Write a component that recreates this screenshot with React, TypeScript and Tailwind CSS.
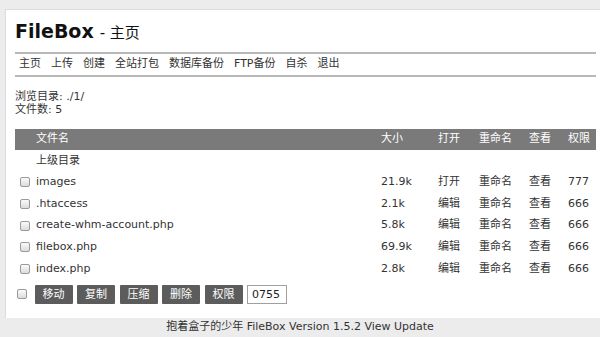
import React from 'react'

const files = [
  { name: 'images', size: '21.9k', open: '打开', perm: '777' },
  { name: '.htaccess', size: '2.1k', open: '编辑', perm: '666' },
  { name: 'create-whm-account.php', size: '5.8k', open: '编辑', perm: '666' },
  { name: 'filebox.php', size: '69.9k', open: '编辑', perm: '666' },
  { name: 'index.php', size: '2.8k', open: '编辑', perm: '666' },
]

const nav = ['主页', '上传', '创建', '全站打包', '数据库备份', 'FTP备份', '自杀', '退出']
const actions = ['移动', '复制', '压缩', '删除', '权限']

function Check() {
  return <span className="block w-[10px] h-[10px] rounded-[2px] border border-[#9a9a9a] bg-gradient-to-b from-[#fafafa] to-[#dcdcdc]" />
}

export default function App() {
  return (
    <div
      className="w-[600px] h-[337px] bg-[#ececec] flex flex-col text-[#333] overflow-hidden"
      style={{ fontFamily: '"DejaVu Sans", "Noto Sans CJK SC", sans-serif' }}
    >
      <div className="ml-[5px] mt-[9px] h-[309px] bg-white border-l border-t border-[#dcdcdc] pl-[9px] pr-[4px]">
        {/* 标题 */}
        <div className="h-[42px] flex items-end pb-[11px]">
          <span className="text-[19px] font-bold text-[#111] leading-none">FileBox</span>
          <span className="text-[15px] text-[#111] leading-none ml-[6px]">- 主页</span>
        </div>
        <div className="border-t-2 border-[#b8b8b8]" />
        <div className="h-[21px] flex items-center gap-[10px] pl-[4px] text-[11px]">
          {nav.map((n) => (
            <span key={n}>{n}</span>
          ))}
        </div>
        <div className="border-t-2 border-[#b8b8b8]" />

        <div className="mt-[13px] text-[11px] leading-[13px]">
          <div>浏览目录: ./1/</div>
          <div>文件数: 5</div>
        </div>

        <table className="mt-[13px] w-[581px] text-[11px] border-collapse table-fixed">
          <colgroup>
            <col className="w-[20px]" />
            <col className="w-[341px]" />
            <col className="w-[57px]" />
            <col className="w-[41px]" />
            <col className="w-[50px]" />
            <col className="w-[39px]" />
            <col className="w-[33px]" />
          </colgroup>
          <thead>
            <tr className="h-[21px] bg-[#7a7a7a] text-white text-left">
              <th />
              <th className="font-normal pl-[1px]">文件名</th>
              <th className="font-normal pl-[5px]">大小</th>
              <th className="font-normal pl-[5px]">打开</th>
              <th className="font-normal pl-[5px]">重命名</th>
              <th className="font-normal pl-[5px]">查看</th>
              <th className="font-normal pl-[5px]">权限</th>
            </tr>
          </thead>
          <tbody>
            <tr className="h-[21.6px]">
              <td />
              <td className="pl-[1px]">上级目录</td>
              <td colSpan={5} />
            </tr>
            {files.map((f) => (
              <tr key={f.name} className="h-[21.6px]">
                <td className="pl-[5px]">
                  <Check />
                </td>
                <td className="pl-[1px]">{f.name}</td>
                <td className="pl-[5px]">{f.size}</td>
                <td className="pl-[5px]">{f.open}</td>
                <td className="pl-[5px]">重命名</td>
                <td className="pl-[5px]">查看</td>
                <td className="pl-[5px]">{f.perm}</td>
              </tr>
            ))}
          </tbody>
        </table>

        <div className="mt-[5px] flex items-center gap-[4.5px] pl-[2px]">
          <span className="mr-[3px]">
            <Check />
          </span>
          {actions.map((a) => (
            <button key={a} type="button" className="w-[38px] h-[19px] bg-[#5c5c5c] text-white text-[11px] leading-none rounded-[1px]">
              {a}
            </button>
          ))}
          <input
            readOnly
            value="0755"
            className="w-[40px] h-[19px] border border-[#a0a0a0] px-[4px] text-[11px] text-[#222] outline-none"
          />
        </div>
      </div>

      <div className="flex-1 flex items-center justify-center text-[11px] text-[#333]">
        抱着盒子的少年 FileBox Version 1.5.2 View Update
      </div>
    </div>
  )
}
